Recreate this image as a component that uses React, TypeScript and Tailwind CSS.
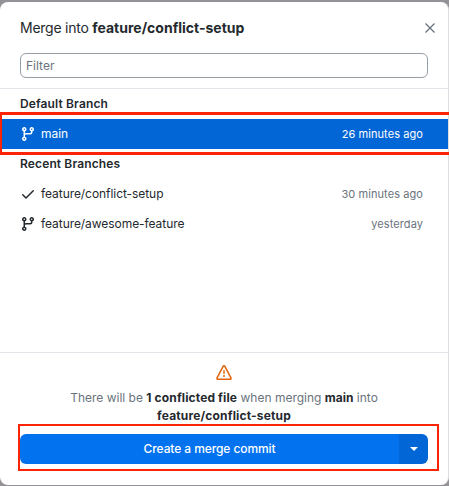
import React from "react";

type IconProps = { className?: string };

function BranchIcon({ className = "" }: IconProps) {
  return (
    <svg viewBox="0 0 16 16" className={`size-4 shrink-0 ${className}`} fill="currentColor">
      <path d="M9.5 3.25a2.25 2.25 0 1 1 3 2.122V6A2.5 2.5 0 0 1 10 8.5H6a1 1 0 0 0-1 1v1.128a2.251 2.251 0 1 1-1.5 0V5.372a2.25 2.25 0 1 1 1.5 0v1.836A2.493 2.493 0 0 1 6 7h4a1 1 0 0 0 1-1v-.628A2.25 2.25 0 0 1 9.5 3.25Zm-6 0a.75.75 0 1 0 1.5 0 .75.75 0 0 0-1.5 0Zm8.25-.75a.75.75 0 1 0 0 1.5.75.75 0 0 0 0-1.5ZM4.25 12a.75.75 0 1 0 0 1.5.75.75 0 0 0 0-1.5Z" />
    </svg>
  );
}

function CheckIcon({ className = "" }: IconProps) {
  return (
    <svg viewBox="0 0 16 16" className={`size-4 shrink-0 ${className}`} fill="currentColor">
      <path d="M13.78 4.22a.75.75 0 0 1 0 1.06l-7.25 7.25a.75.75 0 0 1-1.06 0L2.22 9.28a.751.751 0 0 1 1.06-1.06L6 10.94l6.72-6.72a.75.75 0 0 1 1.06 0Z" />
    </svg>
  );
}

function AlertIcon({ className = "" }: IconProps) {
  return (
    <svg viewBox="0 0 16 16" className={`size-4 shrink-0 ${className}`} fill="currentColor">
      <path d="M6.457 1.047c.659-1.234 2.427-1.234 3.086 0l6.082 11.378A1.75 1.75 0 0 1 14.082 15H1.918a1.75 1.75 0 0 1-1.543-2.575Zm1.763.707a.25.25 0 0 0-.44 0L1.698 13.132a.25.25 0 0 0 .22.368h12.164a.25.25 0 0 0 .22-.368Zm.53 3.996v2.5a.75.75 0 0 1-1.5 0v-2.5a.75.75 0 0 1 1.5 0ZM9 11a1 1 0 1 1-2 0 1 1 0 0 1 2 0Z" />
    </svg>
  );
}

function BranchRow({
  name,
  time,
  current,
  selected,
}: {
  name: string;
  time: string;
  current?: boolean;
  selected?: boolean;
}) {
  return (
    <div
      className={`flex h-[30px] items-center pl-5 pr-[25px] ${
        selected ? "bg-[#0366d6] text-white" : "text-[#24292e]"
      }`}
    >
      {current ? <CheckIcon /> : <BranchIcon />}
      <span className="ml-[5px] grow text-[12px] tracking-[-0.06px]">{name}</span>
      <span className={`text-[11px] tracking-[0.08px] ${selected ? "text-white" : "text-[#6a737d]"}`}>{time}</span>
    </div>
  );
}

function GroupHeader({ children }: { children: React.ReactNode }) {
  return (
    <h2 className="flex h-[30px] items-center pl-[20px] text-[12px] font-semibold tracking-[0.13px] text-[#24292e]">
      {children}
    </h2>
  );
}

export default function App() {
  return (
    <div className="relative h-[486px] w-[449px] overflow-hidden bg-[#949296] pt-[2px] pb-[1px] font-['Inter',sans-serif] leading-none text-[#24292e]">
      <div className="flex h-full w-[449px] flex-col overflow-hidden rounded-[8px] border-r border-[#dedde0] bg-white">
        <header className="flex h-[51px] shrink-0 items-center justify-between pl-5 pr-[12px]">
          <h1 className="text-[14px]">
            <span className="tracking-[-0.25px]">Merge into </span>
            <strong className="font-bold">feature/conflict-setup</strong>
          </h1>
          <svg viewBox="0 0 12 12" className="size-3" fill="none" stroke="#6a737d" strokeWidth="1.3">
            <path d="M1.5 1.5l9 9M10.5 1.5l-9 9" />
          </svg>
        </header>
        <div className="h-[36px] shrink-0 border-b border-[#e1e4e8] pl-5 pr-[20px]">
          <input
            placeholder="Filter"
            className="block h-[25px] w-full rounded-[6px] border border-[#959da5] px-[5px] text-[12px] outline-none placeholder:text-[#6a737d]"
          />
        </div>
        <main className="grow">
          <GroupHeader>Default Branch</GroupHeader>
          <BranchRow name="main" time="26 minutes ago" selected />
          <GroupHeader>Recent Branches</GroupHeader>
          <BranchRow name="feature/conflict-setup" time="30 minutes ago" current />
          <BranchRow name="feature/awesome-feature" time="yesterday" />
        </main>
        <footer className="flex h-[133px] shrink-0 flex-col items-center border-t border-[#e1e4e8] px-5 pt-3">
          <AlertIcon className="text-[#e36209]" />
          <p className="mt-[8px] w-full text-center text-[12px] leading-[18px] text-[#6a737d]">
            There will be <strong className="font-bold tracking-[0.13px] text-[#24292e]">1 conflicted file</strong> when
            merging <strong className="font-bold text-[#24292e]">main</strong> into
            <br />
            <strong className="font-bold tracking-[0.16px] text-[#24292e]">feature/conflict-setup</strong>
          </p>
          <div className="mt-[9px] flex h-[30px] w-full overflow-hidden rounded-[6px] text-white">
            <button className="grow bg-[#0372ef] text-[12px] font-medium tracking-[-0.09px]">Create a merge commit</button>
            <button className="flex w-[29px] items-center justify-center bg-[#0366d6]">
              <svg viewBox="0 0 8 4" className="h-1 w-2" fill="currentColor">
                <path d="M0 0h8L4 4z" />
              </svg>
            </button>
          </div>
        </footer>
      </div>
      <div className="absolute left-[-1px] top-[112px] h-[43px] w-[453px] border-3 border-[#fb2407]" />
      <div className="absolute left-[18px] top-[424px] h-[47px] w-[421px] border-[2.5px] border-[#fb2407]" />
    </div>
  );
}
